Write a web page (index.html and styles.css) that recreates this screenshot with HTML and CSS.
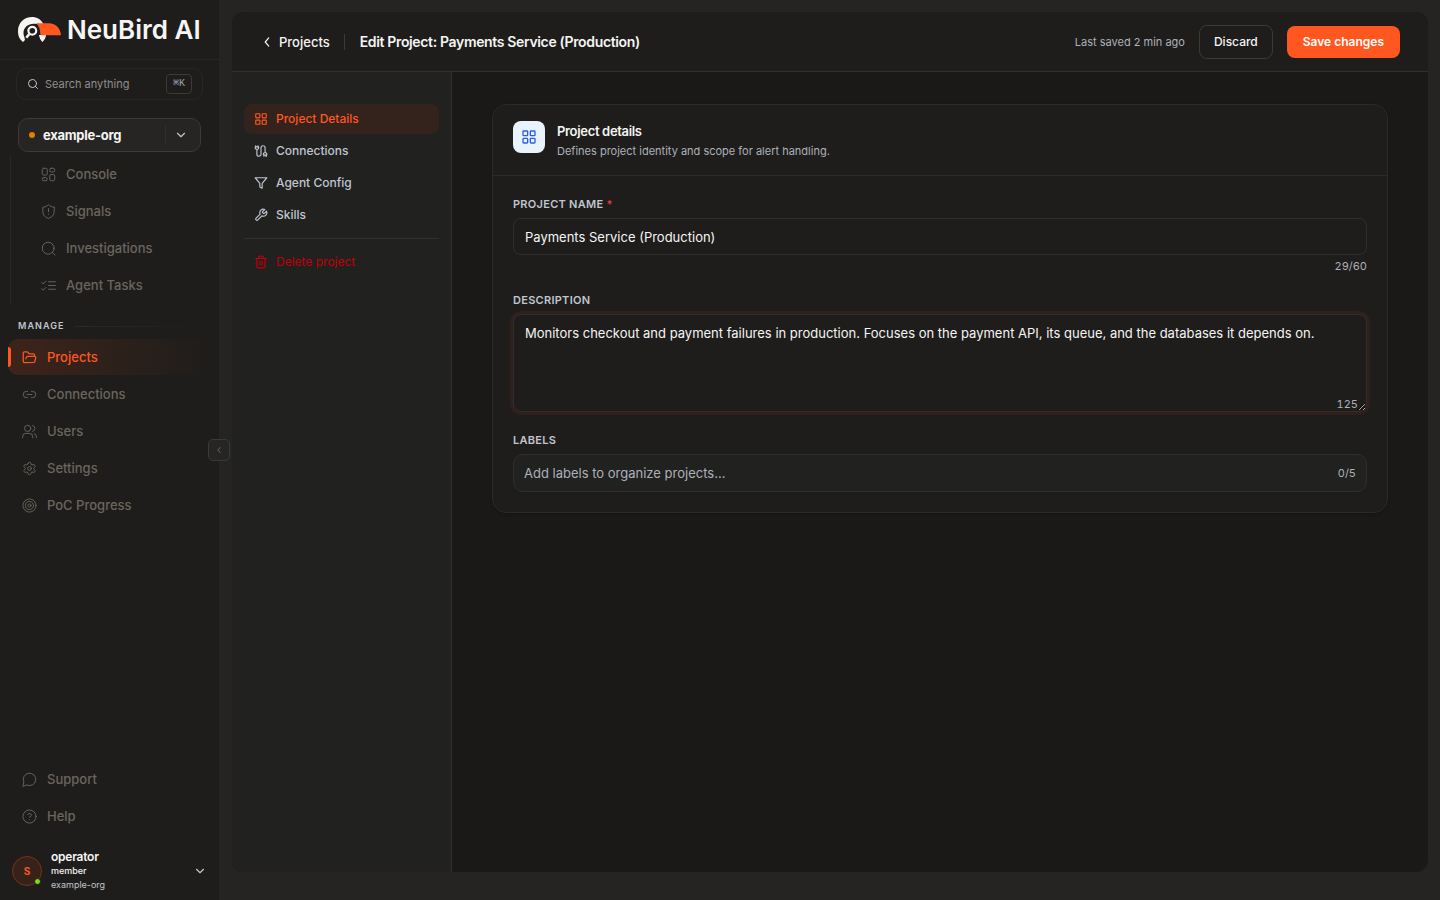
FILE: index.html
```html
<!DOCTYPE html>
<html lang="en">
<head>
    <meta charset="UTF-8">
    <meta name="viewport" content="width=device-width, initial-scale=1">
    <title>Edit Project - NeuBird AI</title>
    <link rel="stylesheet" href="styles.css">
</head>
<body>
    <div class="app">
        <aside class="sidebar">
            <a href="#" class="brand">
                <svg class="brand-mark" viewBox="0 0 43 26" fill="none">
                    <path d="M5 25C1 22 0 18 0 14 0 6 6 0 14 0c5 0 9 2.500 11.500 7H18C11 6 5.500 10 5.500 16c0 2 .6 3 1 4.500L7 23z" fill="#f7f5f1"/>
                    <path d="M21 18h7c0 3-2 5-3.500 7-2-2-3-4-3.500-7z" fill="#f7f5f1"/>
                    <path d="M18 6.300H31c7 0 11.500 5 12 12H23.500c-.8 0-1.200-.5-1.200-1.200C22.300 12 21 9 18 6.300z" fill="#ff571f"/>
                    <circle cx="14.3" cy="13.800" r="3.900" stroke="#f7f5f1" stroke-width="2.2"/>
                    <path d="M11.300 17L8.300 20.700" stroke="#f7f5f1" stroke-width="2.600"/>
                </svg>
                <span class="brand-name">NeuBird AI</span>
            </a>

            <button class="search">
                <svg class="icon-sm" viewBox="0 0 24 24"><circle cx="11" cy="11" r="8"/><path d="m21 21-4.3-4.3"/></svg>
                <span>Search anything</span>
                <kbd>⌘K</kbd>
            </button>

            <button class="org">
                <span class="org-dot"></span>
                <span class="org-name">example-org</span>
                <span class="org-toggle">
                    <svg class="icon-sm" viewBox="0 0 24 24"><path d="m6 9 6 6 6-6"/></svg>
                </span>
            </button>

            <nav class="nav nav-org">
                <a href="#">
                    <svg class="icon" viewBox="0 0 24 24"><rect x="2" y="2" width="8" height="11" rx="2.500"/><rect x="14" y="2" width="8" height="6" rx="2.500"/><rect x="14" y="12" width="8" height="10" rx="2.500"/><rect x="2" y="17" width="8" height="5" rx="2.500"/></svg>
                    Console
                </a>
                <a href="#">
                    <svg class="icon" viewBox="0 0 24 24"><path d="M21 13c0 5-3.500 8-9 10-5.500-2-9-5-9-10V5c3.500 0 6.500-1.500 9-4 2.500 2.500 5.500 4 9 4z"/><path d="M12 7.500v5M12 16.500h.01"/></svg>
                    Signals
                </a>
                <a href="#">
                    <svg class="icon" viewBox="0 0 24 24"><circle cx="11.5" cy="11.5" r="9.500"/><path d="m22.500 22.500-4.300-4.300"/></svg>
                    Investigations
                </a>
                <a href="#">
                    <svg class="icon" viewBox="0 0 24 24"><path d="m1 17 2.500 2.500L8 15M1 7l2.500 2.500L8 5M12 6h11M12 12h11M12 18h11"/></svg>
                    Agent Tasks
                </a>
            </nav>

            <h2 class="nav-heading">Manage</h2>
            <nav class="nav">
                <a href="#" class="active">
                    <svg class="icon" viewBox="0 0 24 24"><path d="m6 14 1.5-2.9A2 2 0 0 1 9.24 10H20a2 2 0 0 1 1.94 2.5l-1.54 6a2 2 0 0 1-1.95 1.5H4a2 2 0 0 1-2-2V5a2 2 0 0 1 2-2h3.9a2 2 0 0 1 1.69.9l.81 1.2a2 2 0 0 0 1.67.9H18a2 2 0 0 1 2 2v2"/></svg>
                    Projects
                </a>
                <a href="#">
                    <svg class="icon" viewBox="0 0 24 24"><path d="M9 17H7A5 5 0 0 1 7 7h2M15 7h2a5 5 0 1 1 0 10h-2M8 12h8"/></svg>
                    Connections
                </a>
                <a href="#">
                    <svg class="icon" viewBox="0 0 24 24"><circle cx="9" cy="7" r="5"/><path d="M1 22v-2a5 5 0 0 1 5-5h6a5 5 0 0 1 5 5v2M17 2.200a5 5 0 0 1 0 9.600M23 22v-2a5 5 0 0 0-3.500-4.700"/></svg>
                    Users
                </a>
                <a href="#">
                    <svg class="icon" viewBox="0 0 24 24"><path d="M9.67 4.14a2.34 2.34 0 0 1 4.66 0 2.34 2.34 0 0 0 3.32 1.91 2.34 2.34 0 0 1 2.33 4.03 2.34 2.34 0 0 0 0 3.84 2.34 2.34 0 0 1-2.33 4.03 2.34 2.34 0 0 0-3.32 1.91 2.34 2.34 0 0 1-4.66 0 2.34 2.34 0 0 0-3.32-1.91 2.34 2.34 0 0 1-2.33-4.03 2.34 2.34 0 0 0 0-3.84 2.34 2.34 0 0 1 2.33-4.03 2.34 2.34 0 0 0 3.32-1.91"/><circle cx="12" cy="12" r="3"/></svg>
                    Settings
                </a>
                <a href="#">
                    <svg class="icon" viewBox="0 0 24 24"><circle cx="12" cy="12" r="10.500"/><circle cx="12" cy="12" r="6.500"/><circle cx="12" cy="12" r="2.500"/></svg>
                    PoC Progress
                </a>
            </nav>

            <nav class="nav nav-bottom">
                <a href="#">
                    <svg class="icon" viewBox="0 0 24 24"><path d="M7.900 21A10 10 0 1 0 3 16.100L1.500 22.500Z"/></svg>
                    Support
                </a>
                <a href="#">
                    <svg class="icon" viewBox="0 0 24 24"><circle cx="12" cy="12" r="10.500"/><path d="M9.09 9a3 3 0 0 1 5.83 1c0 2-3 3-3 3M12 17h.01"/></svg>
                    Help
                </a>
            </nav>

            <button class="user">
                <span class="avatar">S<span class="status"></span></span>
                <span class="user-info">
                    <span class="user-name">operator</span>
                    <span class="user-role">member</span>
                    <span class="user-org">example-org</span>
                </span>
                <svg class="icon-sm" viewBox="0 0 24 24"><path d="m6 9 6 6 6-6"/></svg>
            </button>

            <button class="collapse" aria-label="Collapse sidebar">
                <svg viewBox="0 0 24 24"><path d="m15 18-6-6 6-6"/></svg>
            </button>
        </aside>

        <main class="panel">
            <header class="topbar">
                <a href="#" class="back">
                    <svg class="icon-sm" viewBox="0 0 24 24"><path d="m15 19-6-7 6-7"/></svg>
                    Projects
                </a>
                <h1>Edit Project: Payments Service (Production)</h1>
                <span class="saved">Last saved 2 min ago</span>
                <button class="btn btn-outline">Discard</button>
                <button class="btn btn-primary">Save changes</button>
            </header>

            <div class="workspace">
                <nav class="subnav">
                    <a href="#" class="active">
                        <svg class="icon-sm" viewBox="0 0 24 24"><rect x="3" y="3" width="7" height="7" rx="1"/><rect x="14" y="3" width="7" height="7" rx="1"/><rect x="14" y="14" width="7" height="7" rx="1"/><rect x="3" y="14" width="7" height="7" rx="1"/></svg>
                        Project Details
                    </a>
                    <a href="#">
                        <svg class="icon-sm" viewBox="0 0 24 24"><path d="M17 21v-2a1 1 0 0 1-1-1v-1a2 2 0 0 1 2-2h2a2 2 0 0 1 2 2v1a1 1 0 0 1-1 1v2"/><path d="M19 15V6.5a1 1 0 0 0-7 0v11a1 1 0 0 1-7 0V9"/><path d="M21 21v-2h-4M3 5h4V3"/><path d="M7 5a1 1 0 0 1 1 1v1a2 2 0 0 1-2 2H4a2 2 0 0 1-2-2V6a1 1 0 0 1 1-1V3"/></svg>
                        Connections
                    </a>
                    <a href="#">
                        <svg class="icon-sm" viewBox="0 0 24 24"><path d="M22 3H2l8 9.46V19l4 2v-8.54L22 3z"/></svg>
                        Agent Config
                    </a>
                    <a href="#">
                        <svg class="icon-sm" viewBox="0 0 24 24"><path d="M14.7 6.3a1 1 0 0 0 0 1.4l1.6 1.6a1 1 0 0 0 1.4 0l3.77-3.77a6 6 0 0 1-7.94 7.94l-6.91 6.91a2.12 2.12 0 0 1-3-3l6.91-6.91a6 6 0 0 1 7.94-7.94l-3.76 3.76z"/></svg>
                        Skills
                    </a>
                    <hr>
                    <button class="delete">
                        <svg class="icon-sm" viewBox="0 0 24 24"><path d="M3 6h18M19 6v14a2 2 0 0 1-2 2H7a2 2 0 0 1-2-2V6M8 6V4a2 2 0 0 1 2-2h4a2 2 0 0 1 2 2v2M10 11v6M14 11v6"/></svg>
                        Delete project
                    </button>
                </nav>

                <div class="content">
                    <section class="card">
                        <div class="card-header">
                            <span class="card-icon">
                                <svg viewBox="0 0 24 24"><rect x="3" y="3" width="7" height="7" rx="1"/><rect x="14" y="3" width="7" height="7" rx="1"/><rect x="14" y="14" width="7" height="7" rx="1"/><rect x="3" y="14" width="7" height="7" rx="1"/></svg>
                            </span>
                            <div>
                                <h2>Project details</h2>
                                <p>Defines project identity and scope for alert handling.</p>
                            </div>
                        </div>
                        <form class="card-body">
                            <div class="field">
                                <label for="name">Project name <span class="required">*</span></label>
                                <input type="text" id="name" value="Payments Service (Production)">
                                <span class="counter">29/60</span>
                            </div>
                            <div class="field">
                                <label for="description">Description</label>
                                <div class="textarea-wrap">
                                    <textarea id="description" class="focused">Monitors checkout and payment failures in production. Focuses on the payment API, its queue, and the databases it depends on.</textarea>
                                    <span class="textarea-count">125</span>
                                </div>
                            </div>
                            <div class="field">
                                <label for="labels">Labels</label>
                                <div class="labels-box">
                                    <input type="text" id="labels" placeholder="Add labels to organize projects...">
                                    <span>0/5</span>
                                </div>
                            </div>
                        </form>
                    </section>
                </div>
            </div>
        </main>
    </div>
</body>
</html>
```

FILE: styles.css
```css
:root {
    --bg: #252422;
    --sidebar: #1e1d1b;
    --content: #1a1917;
    --subnav: #21211f;
    --border: #2e2e2c;
    --border-strong: #3a3a38;
    --text: #f5f5f4;
    --text-soft: #c0c5cf;
    --text-muted: #adb1ba;
    --text-dim: #6b655e;
    --orange: #ff571f;
}

* {
    box-sizing: border-box;
}

body {
    margin: 0;
    font-family: Inter, sans-serif;
    font-size: 13px;
    line-height: 20px;
    background: var(--bg);
    color: var(--text);
}

h1, h2, p {
    margin: 0;
}

a {
    color: inherit;
    text-decoration: none;
}

button, input, textarea {
    font: inherit;
    color: inherit;
}

button {
    cursor: pointer;
}

svg {
    flex-shrink: 0;
    fill: none;
    stroke: currentColor;
    stroke-width: 2;
    stroke-linecap: round;
    stroke-linejoin: round;
}

.brand-mark {
    width: 43px;
    height: 26px;
    stroke: none;
    stroke-linecap: butt;
}

.icon {
    width: 15px;
    height: 15px;
    stroke-width: 1.5;
}

.icon-sm {
    width: 14px;
    height: 14px;
}

.app {
    display: flex;
    height: 100vh;
}

/* Sidebar */
.sidebar {
    position: relative;
    display: flex;
    flex-direction: column;
    flex: 0 0 219px;
    background: var(--sidebar);
}

.brand {
    display: flex;
    align-items: center;
    gap: 6px;
    height: 60px;
    padding: 0 16px 0 18px;
    border-bottom: 1px solid #292826;
}

.brand-name {
    font-size: 26px;
    font-weight: 600;
    line-height: 28px;
    white-space: nowrap;
}

.search {
    display: flex;
    align-items: center;
    gap: 6px;
    height: 32px;
    margin: 8px 16px 0;
    padding: 0 10px;
    border: 1px solid #272624;
    border-radius: 10px;
    background: none;
    color: #908f8d;
    font-size: 11px;
}

.search .icon-sm {
    width: 12px;
    height: 12px;
    color: var(--text-soft);
}

.search kbd {
    margin-left: auto;
    padding: 0 6px;
    border: 1px solid var(--border-strong);
    border-radius: 4px;
    color: #9ca3af;
    font-family: "Liberation Mono", monospace;
    font-size: 10px;
    line-height: 18px;
}

.org {
    display: flex;
    align-items: center;
    gap: 8px;
    height: 34px;
    margin: 18px 18px 0;
    padding: 0 12px 0 10px;
    border: 1px solid var(--border-strong);
    border-radius: 10px;
    background: #262523;
    font-weight: 700;
    letter-spacing: -0.02em;
}

.org-dot {
    width: 6px;
    height: 6px;
    border-radius: 50%;
    background: #e17f05;
}

.org-toggle {
    display: flex;
    align-items: center;
    height: 18px;
    margin-left: auto;
    padding-left: 8px;
    border-left: 1px solid #302f2d;
    color: var(--text-soft);
}

.nav {
    display: flex;
    flex-direction: column;
    gap: 1px;
    padding: 0 8px;
}

.nav a {
    position: relative;
    display: flex;
    align-items: center;
    gap: 10px;
    height: 36px;
    padding: 0 14px;
    border-radius: 10px;
    color: var(--text-dim);
    font-weight: 500;
}

.nav-org {
    margin: 3px 0 0 10px;
    padding: 1px 8px;
    border-left: 1px solid #292826;
}

.nav-org a {
    padding: 0 22px;
}

.nav .active {
    background: linear-gradient(90deg, #3e241a, var(--sidebar));
    color: var(--orange);
}

.nav .active .icon {
    stroke-width: 2;
}

.nav .active::before {
    content: "";
    position: absolute;
    left: 0;
    top: 8px;
    bottom: 8px;
    width: 3px;
    border-radius: 0 3px 3px 0;
    background: var(--orange);
}

.nav-heading {
    display: flex;
    align-items: center;
    gap: 10px;
    margin: 14px 18px 5px;
    color: var(--text-soft);
    font-size: 9px;
    font-weight: 600;
    line-height: 16px;
    letter-spacing: 0.12em;
    text-transform: uppercase;
}

.nav-heading::after {
    content: "";
    flex: 1;
    height: 1px;
    background: linear-gradient(90deg, #2b2a28, transparent);
}

.nav-bottom {
    margin-top: auto;
}

.user {
    display: flex;
    align-items: center;
    gap: 9px;
    margin: 16px 0 8px;
    padding: 0 12px;
    border: 0;
    background: none;
    text-align: left;
}

.user > .icon-sm {
    color: var(--text-soft);
}

.avatar {
    position: relative;
    display: flex;
    align-items: center;
    justify-content: center;
    width: 30px;
    height: 30px;
    border: 1px solid #7a3018;
    border-radius: 50%;
    background: #37221a;
    color: var(--orange);
    font-size: 10px;
    font-weight: 700;
}

.status {
    position: absolute;
    right: 0;
    bottom: 0;
    width: 7px;
    height: 7px;
    border: 1px solid var(--sidebar);
    border-radius: 50%;
    background: #7ddc13;
}

.user-info {
    display: flex;
    flex: 1;
    flex-direction: column;
    font-size: 9px;
    line-height: 14px;
}

.user-name {
    font-size: 12px;
    font-weight: 600;
    letter-spacing: -0.02em;
}

.user-role {
    font-weight: 500;
}

.user-org {
    color: var(--text-soft);
}

.collapse {
    position: absolute;
    right: -11px;
    top: 50%;
    display: flex;
    align-items: center;
    justify-content: center;
    width: 22px;
    height: 22px;
    margin-top: -11px;
    padding: 0;
    border: 1px solid var(--border-strong);
    border-radius: 5px;
    background: #262523;
    color: #77736d;
}

.collapse svg {
    width: 10px;
    height: 10px;
}

/* Main panel */
.panel {
    display: flex;
    flex: 1;
    flex-direction: column;
    min-width: 0;
    margin: 12px 12px 28px 13px;
    overflow: hidden;
    border-radius: 12px;
    background: var(--content);
}

.topbar {
    display: flex;
    align-items: center;
    height: 60px;
    padding: 0 28px;
    border-bottom: 1px solid #31302e;
    background: var(--sidebar);
}

.back {
    display: flex;
    align-items: center;
    gap: 5px;
    font-weight: 500;
}

.topbar h1 {
    margin-left: 14px;
    padding-left: 15px;
    border-left: 1px solid var(--border-strong);
    font-size: 14px;
    font-weight: 600;
    line-height: 16px;
    letter-spacing: -0.025em;
}

.saved {
    margin-left: auto;
    color: var(--text-muted);
    font-size: 11px;
}

.btn {
    margin-left: 14px;
    padding: 6px 16px;
    border: 0;
    border-radius: 8px;
    font-size: 12px;
}

.btn-outline {
    padding: 6px 14px;
    border: 1px solid var(--border-strong);
    background: none;
    font-weight: 500;
}

.btn-primary {
    background: var(--orange);
    color: #fff;
    font-weight: 600;
}

.workspace {
    display: flex;
    flex: 1;
    min-height: 0;
}

.subnav {
    display: flex;
    flex: 0 0 220px;
    flex-direction: column;
    gap: 2px;
    padding: 32px 12px;
    border-right: 1px solid #31302e;
    background: var(--subnav);
    font-size: 12px;
    font-weight: 500;
}

.subnav a, .subnav .delete {
    display: flex;
    align-items: center;
    gap: 8px;
    height: 30px;
    padding: 0 10px;
    border-radius: 8px;
    color: var(--text-soft);
}

.subnav .active {
    background: #33231c;
    color: var(--orange);
}

.subnav hr {
    width: 100%;
    margin: 6px 0;
    border: 0;
    border-top: 1px solid #31302e;
}

.subnav .delete {
    border: 0;
    background: none;
    color: #c10007;
    font-weight: 400;
}

.content {
    flex: 1;
    min-width: 0;
    padding: 32px 40px;
    overflow: auto;
}

.card {
    border: 1px solid #2a2a28;
    border-radius: 14px;
    background: var(--sidebar);
    box-shadow: 0 1px 3px rgba(0, 0, 0, 0.2);
}

.card-header {
    display: flex;
    gap: 12px;
    padding: 16px 20px 14px;
    border-bottom: 1px solid #2a2a28;
}

.card-header h2 {
    font-size: 13px;
    font-weight: 600;
    letter-spacing: -0.025em;
}

.card-header p {
    color: var(--text-muted);
    font-size: 11px;
}

.card-icon {
    display: flex;
    align-items: center;
    justify-content: center;
    width: 32px;
    height: 32px;
    border-radius: 8px;
    background: #e8f3fc;
    color: #2b5cf0;
}

.card-icon svg {
    width: 16px;
    height: 16px;
}

.card-body {
    display: flex;
    flex-direction: column;
    gap: 20px;
    padding: 20px;
}

.field {
    display: flex;
    flex-direction: column;
}

.field label {
    margin-bottom: 6px;
    color: var(--text-soft);
    font-size: 11px;
    font-weight: 600;
    line-height: 16px;
    letter-spacing: 0.025em;
    text-transform: uppercase;
}

.required {
    color: #e5393b;
}

.field > input, textarea {
    width: 100%;
    padding: 8px 11px;
    border: 1px solid #2f2f2d;
    border-radius: 8px;
    background: var(--sidebar);
    outline: none;
}

.field > input {
    height: 37px;
}

.counter, .textarea-count, .labels-box span {
    color: var(--text-muted);
    font-size: 11px;
    line-height: 12px;
    font-variant-numeric: tabular-nums;
}

.counter {
    margin-top: 5px;
    text-align: right;
}

.textarea-wrap {
    position: relative;
    display: flex;
}

textarea {
    height: 98px;
    resize: vertical;
}

.focused {
    box-shadow: 0 0 0 3px #30201c;
}

.textarea-count {
    position: absolute;
    right: 9px;
    bottom: 2px;
}

.labels-box {
    display: flex;
    align-items: center;
    padding: 8px 10px;
    border: 1px solid var(--border);
    border-radius: 10px;
    background: var(--subnav);
}

.labels-box input {
    flex: 1;
    min-width: 0;
    padding: 0;
    border: 0;
    background: none;
    outline: none;
}

.labels-box input::placeholder {
    color: var(--text-muted);
    opacity: 1;
}
```
